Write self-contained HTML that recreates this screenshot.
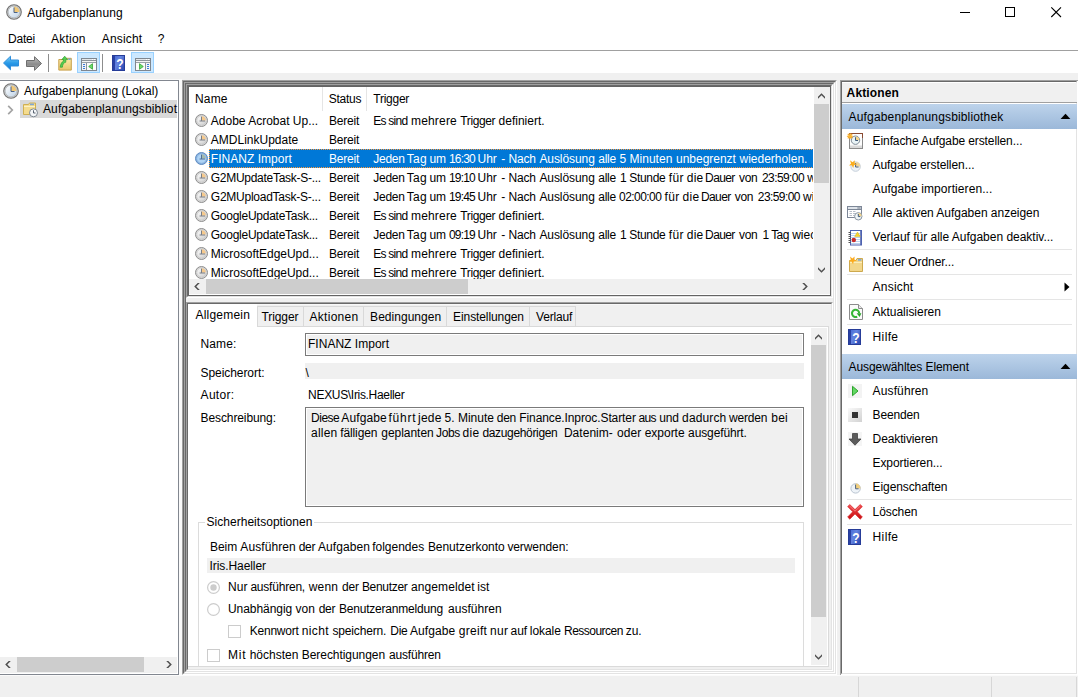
<!DOCTYPE html>
<html lang="de"><head><meta charset="utf-8"><title>Aufgabenplanung</title>
<style>
html,body{margin:0;padding:0;background:#f0f0f0;overflow:hidden}
#app{position:relative;width:1078px;height:697px;overflow:hidden;font:12px 'Liberation Sans', sans-serif;color:#000}
#app div,#app svg,#app span{position:absolute}
#app svg{overflow:visible}
.t{white-space:pre;line-height:14px;font:12px/14px 'Liberation Sans', sans-serif}
</style></head><body>
<div id="app">
<div style="left:0px;top:0px;width:1078px;height:30px;background:#fff"></div>
<svg style="left:6px;top:4px" width="16" height="16" viewBox="0 0 16 16"><defs><linearGradient id="cg6_4" x1="0" y1="0" x2="1" y2="1"><stop offset="0" stop-color="#ffffff"/><stop offset="1" stop-color="#bfd3e6"/></linearGradient></defs><circle cx="8" cy="8" r="7.3" fill="#cfcfcf" stroke="#727272" stroke-width="1.1"/><circle cx="8" cy="8" r="5.8" fill="url(#cg6_4)" stroke="#aeb4ba" stroke-width=".7"/><path d="M8 8V2.5A5.5 5.5 0 0 1 13.5 8Z" fill="#f0c878"/><path d="M8 3.5V8.5H11.5" fill="none" stroke="#4a6388" stroke-width="1"/></svg>
<svg style="left:950px;top:0" width="128" height="30" viewBox="0 0 128 30"><path d="M10 12.5H20" stroke="#000" stroke-width="1"/><rect x="55.5" y="7.5" width="9" height="9" fill="none" stroke="#000" stroke-width="1"/><path d="M101.3 7.3L111 17M111 7.3L101.3 17" stroke="#000" stroke-width="1.1"/></svg>
<div style="left:0px;top:30px;width:1078px;height:20px;background:#fff"></div>
<div style="left:0px;top:50px;width:1078px;height:1px;background:#a0a0a0"></div>
<div style="left:0px;top:51px;width:1078px;height:22px;background:#fff"></div>
<svg style="left:2px;top:54px" width="18" height="18" viewBox="0 0 18 18"><defs><linearGradient id="ba" x1="0" y1="0" x2="0" y2="1"><stop offset="0" stop-color="#7fd0f7"/><stop offset=".5" stop-color="#2a9be8"/><stop offset="1" stop-color="#1577d3"/></linearGradient></defs><path d="M1.5 9L8.5 2.2V6H16.5V12H8.5V15.8Z" fill="url(#ba)" stroke="#2f8fdc" stroke-width="1" stroke-linejoin="round"/></svg>
<svg style="left:25px;top:54px" width="18" height="18" viewBox="0 0 18 18"><defs><linearGradient id="fa" x1="0" y1="0" x2="0" y2="1"><stop offset="0" stop-color="#c4c4c4"/><stop offset=".55" stop-color="#8c8c8c"/><stop offset="1" stop-color="#b0b0b0"/></linearGradient></defs><path d="M16.5 9.5L9.5 2.7V6.5H1.5V12.5H9.5V16.3Z" fill="url(#fa)" stroke="#6e6e6e" stroke-width="1" stroke-linejoin="round"/></svg>
<div style="left:48px;top:54px;width:1px;height:18px;background:#8d8d8d"></div>
<svg style="left:57px;top:55px" width="16" height="16" viewBox="0 0 16 16"><defs><linearGradient id="fo" x1="0" y1="0" x2="0" y2="1"><stop offset="0" stop-color="#fbeaa8"/><stop offset="1" stop-color="#e9c76c"/></linearGradient></defs><path d="M1.8 4.5H8.5L9.5 3.3H14.3V15.1H1.8Z" fill="url(#fo)" stroke="#c9a24a" stroke-width="1"/><rect x="11.3" y="3.6" width="2.4" height="1.2" fill="#5b9be0"/><path d="M3.2 12.2C3.6 8.6 5 6.8 6.6 6V4.6H4.8L7.7 1.2L10.6 4.6H8.8V7.2C6.6 7.6 5.6 9.4 5.4 12.2Z" fill="#52cf52" stroke="#2f9e2f" stroke-width=".7" stroke-linejoin="round"/></svg>
<div style="left:77px;top:52px;width:23px;height:21px;background:#cce8ff;border:1px solid #99d1ff;box-sizing:border-box"></div>
<svg style="left:81px;top:58px" width="16" height="13" viewBox="0 0 16 13"><rect x=".5" y=".5" width="15" height="12" fill="#fbfbfb" stroke="#7f8790"/><rect x="1" y="1" width="14" height="1" fill="#e4e7ea"/><rect x="11" y="1" width="1" height="1" fill="#fff"/><rect x="13" y="1" width="1" height="1" fill="#fff"/><path d="M1 2.5H15" stroke="#8d949b"/><path d="M1 4.5H15" stroke="#9aa1a8"/><rect x="1" y="3" width="14" height="1" fill="#f4f4f4"/><path d="M5.5 5V12" stroke="#8d949b"/><rect x="1" y="5" width="4" height="7" fill="#f2f4f6"/><rect x="2" y="6" width="2" height="1" fill="#3a7ad9"/><rect x="2" y="8" width="2" height="1" fill="#3a7ad9"/><rect x="2" y="10" width="2" height="1" fill="#3a7ad9"/><path d="M11.5 5.7V11.3L7.7 8.5Z" fill="#6ad96a" stroke="#35a535" stroke-width=".8" stroke-linejoin="round"/></svg>
<div style="left:102px;top:54px;width:1px;height:18px;background:#8d8d8d"></div>
<svg style="left:112px;top:55px" width="13" height="16" viewBox="0 0 13 16"><defs><linearGradient id="hht" x1="0" y1="0" x2="1" y2=".6"><stop offset="0" stop-color="#3f63d2"/><stop offset=".55" stop-color="#6585e0"/><stop offset="1" stop-color="#3350b8"/></linearGradient></defs><rect x=".5" y=".5" width="12" height="15" fill="url(#hht)" stroke="#263c98"/><rect x="1" y="1" width="2" height="14" fill="#2a41a4"/><text transform="translate(7.9 13.6) scale(.78 1)" text-anchor="middle" font-family="Liberation Sans, sans-serif" font-weight="bold" font-size="15.5" fill="#fff">?</text></svg>
<div style="left:131px;top:52px;width:23px;height:21px;background:#cce8ff;border:1px solid #99d1ff;box-sizing:border-box"></div>
<svg style="left:135px;top:58px" width="16" height="13" viewBox="0 0 16 13"><rect x=".5" y=".5" width="15" height="12" fill="#fbfbfb" stroke="#7f8790"/><rect x="1" y="1" width="14" height="1" fill="#e4e7ea"/><rect x="11" y="1" width="1" height="1" fill="#fff"/><rect x="13" y="1" width="1" height="1" fill="#fff"/><path d="M1 2.5H15" stroke="#8d949b"/><path d="M1 4.5H15" stroke="#9aa1a8"/><rect x="1" y="3" width="14" height="1" fill="#f4f4f4"/><path d="M10.5 5V12" stroke="#8d949b"/><rect x="11" y="5" width="4" height="7" fill="#f2f4f6"/><rect x="12" y="6" width="2" height="1" fill="#3a7ad9"/><rect x="12" y="8" width="2" height="1" fill="#3a7ad9"/><rect x="12" y="10" width="2" height="1" fill="#3a7ad9"/><path d="M4.5 5.7V11.3L8.3 8.5Z" fill="#6ad96a" stroke="#35a535" stroke-width=".8" stroke-linejoin="round"/></svg>
<div style="left:0px;top:73px;width:1078px;height:624px;background:#f0f0f0"></div>
<div style="left:0px;top:80px;width:179px;height:595px;background:#fff;border-top:1px solid #828790;border-right:1px solid #828790;border-bottom:1px solid #828790;box-sizing:border-box"></div>
<div style="left:179px;top:79px;width:3px;height:596px;background:#fafafa"></div>
<div style="left:0px;top:79px;width:179px;height:1px;background:#fafafa"></div>
<svg style="left:3px;top:83px" width="16" height="16" viewBox="0 0 16 16"><defs><linearGradient id="cg3_83" x1="0" y1="0" x2="1" y2="1"><stop offset="0" stop-color="#ffffff"/><stop offset="1" stop-color="#bfd3e6"/></linearGradient></defs><circle cx="8" cy="8" r="7.3" fill="#cfcfcf" stroke="#727272" stroke-width="1.1"/><circle cx="8" cy="8" r="5.8" fill="url(#cg3_83)" stroke="#aeb4ba" stroke-width=".7"/><path d="M8 8V2.5A5.5 5.5 0 0 1 13.5 8Z" fill="#f0c878"/><path d="M8 3.5V8.5H11.5" fill="none" stroke="#4a6388" stroke-width="1"/></svg>
<div style="left:20px;top:100px;width:157px;height:18px;background:#d9d9d9"></div>
<svg style="left:7px;top:105px" width="7" height="10" viewBox="0 0 7 10"><path d="M1.2 .8L5.3 5L1.2 9.2" fill="none" stroke="#a3a3a3" stroke-width="1.7"/></svg>
<svg style="left:22px;top:101px" width="17" height="17" viewBox="0 0 17 17"><path d="M1.5 3.5H6.5L7.5 2H13.5V13.5H1.5Z" fill="#f5dc8e" stroke="#d0b052" stroke-width="1"/><rect x="8" y="2.6" width="4" height="1.6" fill="#7fa6d8"/><path d="M2 5.5H13" stroke="#fdf2c4"/><circle cx="11.5" cy="11.8" r="4" fill="#f4f6f8" stroke="#7d8791" stroke-width="1"/><path d="M11.5 9.3V12H13.5" fill="none" stroke="#55606e" stroke-width="1"/></svg>
<div style="left:0px;top:657px;width:177px;height:16px;background:#f0f0f0"></div>
<div style="left:17px;top:657px;width:127px;height:15px;background:#cdcdcd"></div>
<svg style="left:5px;top:661px" width="6" height="7" viewBox="0 0 6 7"><path d="M3.7 0L.2 3.5L3.7 7H5.8L2.3 3.5L5.8 0Z" fill="#505050"/></svg>
<svg style="left:166px;top:661px" width="6" height="7" viewBox="0 0 6 7"><path d="M2.3 0L5.8 3.5L2.3 7H.2L3.7 3.5L.2 0Z" fill="#505050"/></svg>
<div style="left:182px;top:80px;width:655px;height:595px;box-sizing:border-box;border-top:1px solid #a0a0a0;border-left:1px solid #a0a0a0;border-right:1px solid #fff;border-bottom:1px solid #fff"></div>
<div style="left:183px;top:81px;width:653px;height:593px;box-sizing:border-box;border-top:1px solid #696969;border-left:1px solid #696969;border-right:1px solid #e3e3e3;border-bottom:1px solid #e3e3e3"></div>
<div style="left:184px;top:82px;width:651px;height:591px;box-sizing:border-box;border-top:1px solid #a0a0a0;border-left:1px solid #a0a0a0;border-right:1px solid #fff;border-bottom:1px solid #fff"></div>
<div style="left:185px;top:83px;width:649px;height:589px;box-sizing:border-box;border-top:1px solid #696969;border-left:1px solid #696969;border-right:1px solid #e3e3e3;border-bottom:1px solid #e3e3e3"></div>
<div style="left:186px;top:84px;width:647px;height:214px;box-sizing:border-box;border-top:1px solid #a0a0a0;border-left:1px solid #a0a0a0;border-right:1px solid #fff;border-bottom:1px solid #fff"></div>
<div style="left:187px;top:85px;width:645px;height:212px;box-sizing:border-box;border-top:1px solid #696969;border-left:1px solid #696969;border-right:1px solid #e3e3e3;border-bottom:1px solid #e3e3e3"></div>
<div style="left:188px;top:86px;width:643px;height:210px;box-sizing:border-box;border:1px solid #646464;background:#fff"></div>
<div style="left:186px;top:302px;width:647px;height:369px;box-sizing:border-box;border-top:1px solid #a0a0a0;border-left:1px solid #a0a0a0;border-right:1px solid #fff;border-bottom:1px solid #fff"></div>
<div style="left:187px;top:303px;width:645px;height:367px;box-sizing:border-box;border-top:1px solid #696969;border-left:1px solid #696969;border-right:1px solid #e3e3e3;border-bottom:1px solid #e3e3e3"></div>
<div style="left:188px;top:304px;width:643px;height:365px;background:#f0f0f0"></div>
<div style="left:188px;top:327px;width:641px;height:340px;background:#fff;box-sizing:border-box;border-right:1px solid #dadada;border-bottom:1px solid #dadada"></div>
<div style="left:322px;top:87px;width:1px;height:24px;background:#e5e5e5"></div>
<div style="left:366px;top:87px;width:1px;height:24px;background:#e5e5e5"></div>
<div style="left:189px;top:87px;width:624px;height:192px;overflow:hidden">
<svg style="left:6px;top:27px" width="14" height="14" viewBox="0 0 14 14"><defs><linearGradient id="sc6_27" x1="0" y1="0" x2="1" y2="1"><stop offset="0" stop-color="#fafafa"/><stop offset="1" stop-color="#cfcfcf"/></linearGradient></defs><circle cx="6.5" cy="6.5" r="6" fill="#d9d9d9" stroke="#8e8e8e" stroke-width="1"/><circle cx="6.5" cy="6.5" r="4.6" fill="url(#sc6_27)" stroke="#bdbdbd" stroke-width=".5"/><path d="M6.5 6.5V2.2A4.3 4.3 0 0 1 10.8 6.5Z" fill="#f6c98c"/><path d="M6.5 2.6V7M4.6 7H10" fill="none" stroke="#7a7f86" stroke-width="1"/></svg>
<svg style="left:6px;top:46px" width="14" height="14" viewBox="0 0 14 14"><defs><linearGradient id="sc6_46" x1="0" y1="0" x2="1" y2="1"><stop offset="0" stop-color="#fafafa"/><stop offset="1" stop-color="#cfcfcf"/></linearGradient></defs><circle cx="6.5" cy="6.5" r="6" fill="#d9d9d9" stroke="#8e8e8e" stroke-width="1"/><circle cx="6.5" cy="6.5" r="4.6" fill="url(#sc6_46)" stroke="#bdbdbd" stroke-width=".5"/><path d="M6.5 6.5V2.2A4.3 4.3 0 0 1 10.8 6.5Z" fill="#f6c98c"/><path d="M6.5 2.6V7M4.6 7H10" fill="none" stroke="#7a7f86" stroke-width="1"/></svg>
<div style="left:20px;top:62px;width:605px;height:19px;background:#0078d7;box-sizing:border-box;border:1px dotted #ff9a3c"></div>
<svg style="left:6px;top:65px" width="14" height="14" viewBox="0 0 14 14"><circle cx="6.5" cy="6.5" r="6" fill="#86afdd" stroke="#5f8cc2" stroke-width="1"/><circle cx="6.5" cy="6.5" r="4.6" fill="#aed3f4" stroke="#8db6e2" stroke-width=".5"/><path d="M6.5 6.5V2.2A4.3 4.3 0 0 1 10.8 6.5Z" fill="#a3b9ad"/><path d="M6.5 2.6V7M4.6 7H10" fill="none" stroke="#4f6f97" stroke-width="1"/></svg>
<svg style="left:6px;top:84px" width="14" height="14" viewBox="0 0 14 14"><defs><linearGradient id="sc6_84" x1="0" y1="0" x2="1" y2="1"><stop offset="0" stop-color="#fafafa"/><stop offset="1" stop-color="#cfcfcf"/></linearGradient></defs><circle cx="6.5" cy="6.5" r="6" fill="#d9d9d9" stroke="#8e8e8e" stroke-width="1"/><circle cx="6.5" cy="6.5" r="4.6" fill="url(#sc6_84)" stroke="#bdbdbd" stroke-width=".5"/><path d="M6.5 6.5V2.2A4.3 4.3 0 0 1 10.8 6.5Z" fill="#f6c98c"/><path d="M6.5 2.6V7M4.6 7H10" fill="none" stroke="#7a7f86" stroke-width="1"/></svg>
<svg style="left:6px;top:103px" width="14" height="14" viewBox="0 0 14 14"><defs><linearGradient id="sc6_103" x1="0" y1="0" x2="1" y2="1"><stop offset="0" stop-color="#fafafa"/><stop offset="1" stop-color="#cfcfcf"/></linearGradient></defs><circle cx="6.5" cy="6.5" r="6" fill="#d9d9d9" stroke="#8e8e8e" stroke-width="1"/><circle cx="6.5" cy="6.5" r="4.6" fill="url(#sc6_103)" stroke="#bdbdbd" stroke-width=".5"/><path d="M6.5 6.5V2.2A4.3 4.3 0 0 1 10.8 6.5Z" fill="#f6c98c"/><path d="M6.5 2.6V7M4.6 7H10" fill="none" stroke="#7a7f86" stroke-width="1"/></svg>
<svg style="left:6px;top:122px" width="14" height="14" viewBox="0 0 14 14"><defs><linearGradient id="sc6_122" x1="0" y1="0" x2="1" y2="1"><stop offset="0" stop-color="#fafafa"/><stop offset="1" stop-color="#cfcfcf"/></linearGradient></defs><circle cx="6.5" cy="6.5" r="6" fill="#d9d9d9" stroke="#8e8e8e" stroke-width="1"/><circle cx="6.5" cy="6.5" r="4.6" fill="url(#sc6_122)" stroke="#bdbdbd" stroke-width=".5"/><path d="M6.5 6.5V2.2A4.3 4.3 0 0 1 10.8 6.5Z" fill="#f6c98c"/><path d="M6.5 2.6V7M4.6 7H10" fill="none" stroke="#7a7f86" stroke-width="1"/></svg>
<svg style="left:6px;top:141px" width="14" height="14" viewBox="0 0 14 14"><defs><linearGradient id="sc6_141" x1="0" y1="0" x2="1" y2="1"><stop offset="0" stop-color="#fafafa"/><stop offset="1" stop-color="#cfcfcf"/></linearGradient></defs><circle cx="6.5" cy="6.5" r="6" fill="#d9d9d9" stroke="#8e8e8e" stroke-width="1"/><circle cx="6.5" cy="6.5" r="4.6" fill="url(#sc6_141)" stroke="#bdbdbd" stroke-width=".5"/><path d="M6.5 6.5V2.2A4.3 4.3 0 0 1 10.8 6.5Z" fill="#f6c98c"/><path d="M6.5 2.6V7M4.6 7H10" fill="none" stroke="#7a7f86" stroke-width="1"/></svg>
<svg style="left:6px;top:160px" width="14" height="14" viewBox="0 0 14 14"><defs><linearGradient id="sc6_160" x1="0" y1="0" x2="1" y2="1"><stop offset="0" stop-color="#fafafa"/><stop offset="1" stop-color="#cfcfcf"/></linearGradient></defs><circle cx="6.5" cy="6.5" r="6" fill="#d9d9d9" stroke="#8e8e8e" stroke-width="1"/><circle cx="6.5" cy="6.5" r="4.6" fill="url(#sc6_160)" stroke="#bdbdbd" stroke-width=".5"/><path d="M6.5 6.5V2.2A4.3 4.3 0 0 1 10.8 6.5Z" fill="#f6c98c"/><path d="M6.5 2.6V7M4.6 7H10" fill="none" stroke="#7a7f86" stroke-width="1"/></svg>
<svg style="left:6px;top:179px" width="14" height="14" viewBox="0 0 14 14"><defs><linearGradient id="sc6_179" x1="0" y1="0" x2="1" y2="1"><stop offset="0" stop-color="#fafafa"/><stop offset="1" stop-color="#cfcfcf"/></linearGradient></defs><circle cx="6.5" cy="6.5" r="6" fill="#d9d9d9" stroke="#8e8e8e" stroke-width="1"/><circle cx="6.5" cy="6.5" r="4.6" fill="url(#sc6_179)" stroke="#bdbdbd" stroke-width=".5"/><path d="M6.5 6.5V2.2A4.3 4.3 0 0 1 10.8 6.5Z" fill="#f6c98c"/><path d="M6.5 2.6V7M4.6 7H10" fill="none" stroke="#7a7f86" stroke-width="1"/></svg>
<span class="t" style="left:21.8px;top:27px;letter-spacing:-0.000px;">Adobe Acrobat Up...</span>
<span class="t" style="left:140.0px;top:27px;letter-spacing:-0.227px;">Bereit</span>
<span class="t" style="left:184.2px;top:27px;letter-spacing:-0.737px;">Es sind </span>
<span class="t" style="left:222.0px;top:27px;letter-spacing:0.173px;">mehrere </span>
<span class="t" style="left:271.3px;top:27px;letter-spacing:-0.383px;">Trigger </span>
<span class="t" style="left:309.6px;top:27px;letter-spacing:-0.003px;">definiert.</span>
<span class="t" style="left:21.8px;top:46px;letter-spacing:0.002px;">AMDLinkUpdate</span>
<span class="t" style="left:140.0px;top:46px;letter-spacing:-0.227px;">Bereit</span>
<span class="t" style="left:21.8px;top:65px;letter-spacing:0.025px;color:#fff;">FINANZ Import</span>
<span class="t" style="left:140.0px;top:65px;letter-spacing:-0.227px;color:#fff;">Bereit</span>
<span class="t" style="left:184.2px;top:65px;letter-spacing:-0.241px;color:#fff;">Jeden </span>
<span class="t" style="left:217.8px;top:65px;letter-spacing:0.247px;color:#fff;">Tag </span>
<span class="t" style="left:240.6px;top:65px;letter-spacing:-0.186px;color:#fff;">um </span>
<span class="t" style="left:259.9px;top:65px;letter-spacing:-0.800px;color:#fff;">16:30 </span>
<span class="t" style="left:288.6px;top:65px;letter-spacing:-0.048px;color:#fff;">Uhr </span>
<span class="t" style="left:312.3px;top:65px;letter-spacing:-0.124px;color:#fff;">- Nach </span>
<span class="t" style="left:350.4px;top:65px;letter-spacing:-0.072px;color:#fff;">Auslösung </span>
<span class="t" style="left:409.2px;top:65px;letter-spacing:-0.222px;color:#fff;">alle </span>
<span class="t" style="left:430.4px;top:65px;letter-spacing:0.033px;color:#fff;">5 Minuten </span>
<span class="t" style="left:487.0px;top:65px;letter-spacing:-0.015px;color:#fff;">unbegrenzt </span>
<span class="t" style="left:550.5px;top:65px;letter-spacing:-0.012px;color:#fff;">wiederholen.</span>
<span class="t" style="left:21.8px;top:84px;letter-spacing:-0.283px;">G2MUpdateTask-S-...</span>
<span class="t" style="left:140.0px;top:84px;letter-spacing:-0.227px;">Bereit</span>
<span class="t" style="left:184.2px;top:84px;letter-spacing:-0.241px;">Jeden </span>
<span class="t" style="left:217.8px;top:84px;letter-spacing:0.247px;">Tag </span>
<span class="t" style="left:240.6px;top:84px;letter-spacing:-0.186px;">um </span>
<span class="t" style="left:259.9px;top:84px;letter-spacing:-0.800px;">19:10 </span>
<span class="t" style="left:288.6px;top:84px;letter-spacing:-0.048px;">Uhr </span>
<span class="t" style="left:312.3px;top:84px;letter-spacing:-0.124px;">- Nach </span>
<span class="t" style="left:350.4px;top:84px;letter-spacing:-0.072px;">Auslösung </span>
<span class="t" style="left:409.2px;top:84px;letter-spacing:-0.222px;">alle </span>
<span class="t" style="left:430.9px;top:84px;letter-spacing:-0.318px;">1 Stunde </span>
<span class="t" style="left:479.8px;top:84px;letter-spacing:0.361px;">für </span>
<span class="t" style="left:497.7px;top:84px;letter-spacing:0.295px;">die </span>
<span class="t" style="left:516.1px;top:84px;letter-spacing:-0.618px;">Dauer </span>
<span class="t" style="left:550.0px;top:84px;letter-spacing:-0.353px;">von </span>
<span class="t" style="left:573.0px;top:84px;letter-spacing:-0.590px;">23:59:00 </span>
<span class="t" style="left:618.2px;top:84px;">w</span>
<span class="t" style="left:21.8px;top:103px;letter-spacing:-0.248px;">G2MUploadTask-S-...</span>
<span class="t" style="left:140.0px;top:103px;letter-spacing:-0.227px;">Bereit</span>
<span class="t" style="left:184.2px;top:103px;letter-spacing:-0.241px;">Jeden </span>
<span class="t" style="left:217.8px;top:103px;letter-spacing:0.247px;">Tag </span>
<span class="t" style="left:240.6px;top:103px;letter-spacing:-0.186px;">um </span>
<span class="t" style="left:259.9px;top:103px;letter-spacing:-0.800px;">19:45 </span>
<span class="t" style="left:288.6px;top:103px;letter-spacing:-0.048px;">Uhr </span>
<span class="t" style="left:312.3px;top:103px;letter-spacing:-0.124px;">- Nach </span>
<span class="t" style="left:350.4px;top:103px;letter-spacing:-0.072px;">Auslösung </span>
<span class="t" style="left:409.2px;top:103px;letter-spacing:-0.222px;">alle </span>
<span class="t" style="left:430.0px;top:103px;letter-spacing:-0.540px;">02:00:00 </span>
<span class="t" style="left:475.6px;top:103px;letter-spacing:0.361px;">für </span>
<span class="t" style="left:493.4px;top:103px;letter-spacing:0.328px;">die </span>
<span class="t" style="left:512.0px;top:103px;letter-spacing:-0.617px;">Dauer </span>
<span class="t" style="left:545.8px;top:103px;letter-spacing:-0.353px;">von </span>
<span class="t" style="left:568.8px;top:103px;letter-spacing:-0.577px;">23:59:00 </span>
<span class="t" style="left:614.0px;top:103px;">wi</span>
<span class="t" style="left:21.8px;top:122px;letter-spacing:-0.262px;">GoogleUpdateTask...</span>
<span class="t" style="left:140.0px;top:122px;letter-spacing:-0.227px;">Bereit</span>
<span class="t" style="left:184.2px;top:122px;letter-spacing:-0.737px;">Es sind </span>
<span class="t" style="left:222.0px;top:122px;letter-spacing:0.173px;">mehrere </span>
<span class="t" style="left:271.3px;top:122px;letter-spacing:-0.383px;">Trigger </span>
<span class="t" style="left:309.6px;top:122px;letter-spacing:-0.003px;">definiert.</span>
<span class="t" style="left:21.8px;top:141px;letter-spacing:-0.262px;">GoogleUpdateTask...</span>
<span class="t" style="left:140.0px;top:141px;letter-spacing:-0.227px;">Bereit</span>
<span class="t" style="left:184.2px;top:141px;letter-spacing:-0.241px;">Jeden </span>
<span class="t" style="left:217.8px;top:141px;letter-spacing:0.247px;">Tag </span>
<span class="t" style="left:240.6px;top:141px;letter-spacing:-0.186px;">um </span>
<span class="t" style="left:259.9px;top:141px;letter-spacing:-0.800px;">09:19 </span>
<span class="t" style="left:288.6px;top:141px;letter-spacing:-0.048px;">Uhr </span>
<span class="t" style="left:312.3px;top:141px;letter-spacing:-0.124px;">- Nach </span>
<span class="t" style="left:350.4px;top:141px;letter-spacing:-0.072px;">Auslösung </span>
<span class="t" style="left:409.2px;top:141px;letter-spacing:-0.222px;">alle </span>
<span class="t" style="left:430.9px;top:141px;letter-spacing:-0.318px;">1 Stunde </span>
<span class="t" style="left:479.8px;top:141px;letter-spacing:0.361px;">für </span>
<span class="t" style="left:497.7px;top:141px;letter-spacing:0.295px;">die </span>
<span class="t" style="left:516.1px;top:141px;letter-spacing:-0.618px;">Dauer </span>
<span class="t" style="left:550.0px;top:141px;letter-spacing:-0.353px;">von </span>
<span class="t" style="left:573.6px;top:141px;letter-spacing:-0.608px;">1 Tag </span>
<span class="t" style="left:603.2px;top:141px;">wiec</span>
<span class="t" style="left:21.8px;top:160px;letter-spacing:-0.043px;">MicrosoftEdgeUpd...</span>
<span class="t" style="left:140.0px;top:160px;letter-spacing:-0.227px;">Bereit</span>
<span class="t" style="left:184.2px;top:160px;letter-spacing:-0.737px;">Es sind </span>
<span class="t" style="left:222.0px;top:160px;letter-spacing:0.173px;">mehrere </span>
<span class="t" style="left:271.3px;top:160px;letter-spacing:-0.383px;">Trigger </span>
<span class="t" style="left:309.6px;top:160px;letter-spacing:-0.003px;">definiert.</span>
<span class="t" style="left:21.8px;top:179px;letter-spacing:-0.043px;">MicrosoftEdgeUpd...</span>
<span class="t" style="left:140.0px;top:179px;letter-spacing:-0.227px;">Bereit</span>
<span class="t" style="left:184.2px;top:179px;letter-spacing:-0.737px;">Es sind </span>
<span class="t" style="left:222.0px;top:179px;letter-spacing:0.173px;">mehrere </span>
<span class="t" style="left:271.3px;top:179px;letter-spacing:-0.383px;">Trigger </span>
<span class="t" style="left:309.6px;top:179px;letter-spacing:-0.003px;">definiert.</span>
</div>
<div style="left:814px;top:87px;width:16px;height:192px;background:#f0f0f0"></div>
<div style="left:814px;top:104px;width:15px;height:79px;background:#cdcdcd"></div>
<svg style="left:818px;top:93px" width="7" height="6" viewBox="0 0 7 6"><path d="M0 3.7L3.5 .2L7 3.7V5.8L3.5 2.3L0 5.8Z" fill="#505050"/></svg>
<svg style="left:818px;top:267px" width="7" height="6" viewBox="0 0 7 6"><path d="M0 2.3L3.5 5.8L7 2.3V.2L3.5 3.7L0 .2Z" fill="#505050"/></svg>
<div style="left:189px;top:279px;width:641px;height:15px;background:#f0f0f0"></div>
<div style="left:206px;top:279px;width:262px;height:15px;background:#cdcdcd"></div>
<svg style="left:194px;top:283px" width="6" height="7" viewBox="0 0 6 7"><path d="M3.7 0L.2 3.5L3.7 7H5.8L2.3 3.5L5.8 0Z" fill="#505050"/></svg>
<svg style="left:802px;top:283px" width="6" height="7" viewBox="0 0 6 7"><path d="M2.3 0L5.8 3.5L2.3 7H.2L3.7 3.5L.2 0Z" fill="#505050"/></svg>
<div style="left:188px;top:304px;width:643px;height:23px;background:#f0f0f0"></div>
<div style="left:188px;top:304px;width:643px;height:1px;background:#f8f8f8"></div>
<div style="left:188px;top:326px;width:641px;height:1px;background:#dadada"></div>
<div style="left:257px;top:306px;width:47px;height:21px;background:#f0f0f0;border:1px solid #d9d9d9;box-sizing:border-box"></div>
<div style="left:303px;top:306px;width:61px;height:21px;background:#f0f0f0;border:1px solid #d9d9d9;box-sizing:border-box"></div>
<div style="left:363px;top:306px;width:84px;height:21px;background:#f0f0f0;border:1px solid #d9d9d9;box-sizing:border-box"></div>
<div style="left:446px;top:306px;width:84px;height:21px;background:#f0f0f0;border:1px solid #d9d9d9;box-sizing:border-box"></div>
<div style="left:529px;top:306px;width:47px;height:21px;background:#f0f0f0;border:1px solid #d9d9d9;box-sizing:border-box"></div>
<div style="left:188px;top:304px;width:69px;height:23px;background:#fff"></div>
<div style="left:305px;top:333px;width:499px;height:23px;background:#f0f0f0;border:1px solid #7a7a7a;box-sizing:border-box;box-shadow:inset 0 0 0 1px #fff"></div>
<div style="left:305px;top:363px;width:499px;height:16px;background:#f0f0f0"></div>
<div style="left:305px;top:407px;width:499px;height:100px;background:#f0f0f0;border:1px solid #7a7a7a;box-sizing:border-box;box-shadow:inset 0 0 0 1px #fff"></div>
<div style="left:198px;top:522px;width:606px;height:144px;border:1px solid #dcdcdc;border-bottom:none;box-sizing:border-box"></div>
<div style="left:205px;top:515px;width:109px;height:14px;background:#fff"></div>
<div style="left:207px;top:558px;width:588px;height:15px;background:#f0f0f0"></div>
<svg style="left:207px;top:581px" width="13" height="13" viewBox="0 0 13 13"><circle cx="6.5" cy="6.5" r="5.9" fill="#fff" stroke="#cccccc" stroke-width="1.2"/><circle cx="6.5" cy="6.5" r="3.2" fill="#cccccc"/></svg>
<svg style="left:207px;top:603px" width="13" height="13" viewBox="0 0 13 13"><circle cx="6.5" cy="6.5" r="5.9" fill="#fff" stroke="#cccccc" stroke-width="1.2"/></svg>
<div style="left:228px;top:625px;width:13px;height:13px;background:#fff;border:1px solid #cccccc;box-sizing:border-box"></div>
<div style="left:207px;top:649px;width:13px;height:13px;background:#fff;border:1px solid #cccccc;box-sizing:border-box"></div>
<div style="left:811px;top:328px;width:16px;height:337px;background:#f0f0f0"></div>
<div style="left:811px;top:345px;width:15px;height:272px;background:#cdcdcd"></div>
<svg style="left:815px;top:334px" width="7" height="6" viewBox="0 0 7 6"><path d="M0 3.7L3.5 .2L7 3.7V5.8L3.5 2.3L0 5.8Z" fill="#505050"/></svg>
<svg style="left:815px;top:654px" width="7" height="6" viewBox="0 0 7 6"><path d="M0 2.3L3.5 5.8L7 2.3V.2L3.5 3.7L0 .2Z" fill="#505050"/></svg>
<div style="left:840px;top:80px;width:238px;height:595px;background:#fff;box-sizing:border-box;border-top:1px solid #a0a0a0;border-left:1px solid #a0a0a0"></div>
<div style="left:841px;top:81px;width:236px;height:593px;box-sizing:border-box;border-top:1px solid #696969;border-left:1px solid #696969;border-right:1px solid #e3e3e3;border-bottom:1px solid #e3e3e3"></div>
<div style="left:842px;top:83px;width:235px;height:19px;background:#f0f0f0"></div>
<div style="left:842px;top:102px;width:235px;height:1px;background:#a0a0a0"></div>
<div style="left:842px;top:104px;width:235px;height:25px;background:linear-gradient(#bdd3eb,#9bb8d9)"></div>
<svg style="left:1060px;top:113px" width="11" height="7" viewBox="0 0 11 7"><path d="M.6 6L5.5 .8L10.4 6Z" fill="#000"/></svg>
<div style="left:842px;top:354px;width:235px;height:25px;background:linear-gradient(#bdd3eb,#9bb8d9)"></div>
<svg style="left:1060px;top:363px" width="11" height="7" viewBox="0 0 11 7"><path d="M.6 6L5.5 .8L10.4 6Z" fill="#000"/></svg>
<div style="left:847px;top:249px;width:225px;height:1px;background:#e5e5e5"></div>
<div style="left:847px;top:274px;width:225px;height:1px;background:#e5e5e5"></div>
<div style="left:847px;top:299px;width:225px;height:1px;background:#e5e5e5"></div>
<div style="left:847px;top:324px;width:225px;height:1px;background:#e5e5e5"></div>
<div style="left:847px;top:499px;width:225px;height:1px;background:#e5e5e5"></div>
<div style="left:847px;top:524px;width:225px;height:1px;background:#e5e5e5"></div>
<svg style="left:1064px;top:282px" width="6" height="10" viewBox="0 0 6 10"><path d="M.5 .5L5.5 5L.5 9.5Z" fill="#000"/></svg>
<svg style="left:847px;top:133px" width="16" height="16" viewBox="0 0 16 16"><rect x="2.5" y=".5" width="13" height="15" fill="#fdfdfd" stroke="#8a8a8a"/><path d="M2 .5H16" stroke="#8a4a32" stroke-width="1"/><path d="M15.5 0V5" stroke="#8a4a32"/><rect x="3" y="12.5" width="12" height="2.5" fill="#d9d9d9"/><circle cx="8.5" cy="7.2" r="4.2" fill="#e9f3f6" stroke="#7f8b96" stroke-width="1"/><path d="M8.5 7.2V3.4A3.8 3.8 0 0 1 12.3 7.2Z" fill="#f3d38a"/><path d="M8.5 4.3V7.5H11" fill="none" stroke="#3f5a7a" stroke-width="1"/><path d="M3 0.10000000000000009L3 6.300000000000001M-0.10000000000000009 3.2L6.1 3.2M0.77 0.97L5.23 5.43M0.77 5.43L5.23 0.97" stroke="#f5a623" stroke-width="1.1"/><circle cx="3" cy="3.2" r="1.40" fill="#fbb731"/></svg>
<svg style="left:849px;top:160px" width="14" height="14" viewBox="0 0 14 14"><circle cx="6.6" cy="6.6" r="4.7" fill="#eef3f8" stroke="#c5cfda" stroke-width="1"/><path d="M6.6 6.6V1.9A4.7 4.7 0 0 1 11.3 6.6Z" fill="#f1d59a"/><path d="M6.6 3V7H9.6" fill="none" stroke="#4d607a" stroke-width="1"/><path d="M1 .3L3.6 2.2L5.8 .2L5.6 3.2L8 4.6L5 5L4.2 8L2.8 5.2L0 5.4L2 3.4Z" fill="#fcae1e"/></svg>
<svg style="left:847px;top:206px" width="16" height="15" viewBox="0 0 16 15"><rect x=".5" y=".5" width="14" height="11" fill="#fff" stroke="#7d8797"/><rect x="1" y="1" width="13" height="2.2" fill="#dfe4ea"/><path d="M1 3.5H14" stroke="#7d8797"/><rect x="10.5" y="1.3" width="1.2" height="1.4" fill="#6c7686"/><rect x="12.3" y="1.3" width="1.2" height="1.4" fill="#6c7686"/><path d="M2.5 5.5H5M6 5.5H8.5M2.5 7.5H5M6 7.5H8.5M2.5 9.5H5M6 9.5H7.5" stroke="#b8bfc9" stroke-width="1"/><circle cx="11.3" cy="10.3" r="3.7" fill="#eef4f7" stroke="#8a96a2" stroke-width="1"/><path d="M11.3 10.3V7A3.3 3.3 0 0 1 14.6 10.3Z" fill="#f3d38a"/><path d="M11.3 8V10.6H13.3" fill="none" stroke="#3f5a7a" stroke-width="1"/></svg>
<svg style="left:848px;top:230px" width="14" height="16" viewBox="0 0 14 16"><rect x="2.5" y=".5" width="11" height="14.5" fill="#fff" stroke="#4e63b0"/><path d="M13 .5V15" stroke="#4e63b0" stroke-width="1.6"/><path d="M3 3.5H12M3 5.5H12M3 7.5H12M3 9.5H12M3 11.5H12M3 13.5H12" stroke="#aac6ea" stroke-width=".8"/><path d="M.5 2.5H3M.5 4.5H3M.5 6.5H3M.5 8.5H3M.5 10.5H3M.5 12.5H3" stroke="#555" stroke-width="1"/><path d="M9.5 2L12.3 6.6H6.7Z" fill="#f6d22c" stroke="#d9b21a" stroke-width=".5"/><circle cx="5.8" cy="10" r="2.2" fill="#c92a2a"/></svg>
<svg style="left:848px;top:256px" width="15" height="16" viewBox="0 0 15 16"><path d="M1.5 4.5H8L9 2.5H14.5V15.5H1.5Z" fill="#f2d68a" stroke="#cda94e" stroke-width="1"/><rect x="10" y="3.2" width="3.4" height="1.4" fill="#6fa0dc"/><path d="M2 6.5H14" stroke="#fbeebc"/><path d="M2 .6L4.4 2.4L6.6 .4L6.4 3.4L8.8 4.8L5.8 5.2L5 8.2L3.6 5.4L.8 5.6L2.8 3.6Z" fill="#fcaa1c"/></svg>
<svg style="left:849px;top:304px" width="14" height="16" viewBox="0 0 14 16"><path d="M.5 .5H9.5L13.5 4.5V15.5H.5Z" fill="#fbfbfb" stroke="#8c8c8c"/><path d="M9.5 .5V4.5H13.5" fill="#e8e8e8" stroke="#8c8c8c"/><path d="M10.2 9.2A3.6 3.6 0 1 0 8.2 12.6" fill="none" stroke="#35b535" stroke-width="2.1"/><path d="M7.6 9.2H12.4L10.6 13Z" fill="#2aa52a"/></svg>
<svg style="left:848px;top:329px" width="13" height="16" viewBox="0 0 13 16"><defs><linearGradient id="hh329" x1="0" y1="0" x2="1" y2=".6"><stop offset="0" stop-color="#3f63d2"/><stop offset=".55" stop-color="#6585e0"/><stop offset="1" stop-color="#3350b8"/></linearGradient></defs><rect x=".5" y=".5" width="12" height="15" fill="url(#hh329)" stroke="#263c98"/><rect x="1" y="1" width="2" height="14" fill="#2a41a4"/><text transform="translate(7.9 13.6) scale(.78 1)" text-anchor="middle" font-family="Liberation Sans, sans-serif" font-weight="bold" font-size="15.5" fill="#fff">?</text></svg>
<svg style="left:848px;top:529px" width="13" height="16" viewBox="0 0 13 16"><defs><linearGradient id="hh529" x1="0" y1="0" x2="1" y2=".6"><stop offset="0" stop-color="#3f63d2"/><stop offset=".55" stop-color="#6585e0"/><stop offset="1" stop-color="#3350b8"/></linearGradient></defs><rect x=".5" y=".5" width="12" height="15" fill="url(#hh529)" stroke="#263c98"/><rect x="1" y="1" width="2" height="14" fill="#2a41a4"/><text transform="translate(7.9 13.6) scale(.78 1)" text-anchor="middle" font-family="Liberation Sans, sans-serif" font-weight="bold" font-size="15.5" fill="#fff">?</text></svg>
<svg style="left:848px;top:384px" width="14" height="14" viewBox="0 0 14 14"><rect width="14" height="14" fill="#f3f3f3"/><path d="M4.5 2.3V11.7L10 7Z" fill="#62d862" stroke="#2ea32e" stroke-width="1" stroke-linejoin="round"/></svg>
<svg style="left:848px;top:408px" width="14" height="14" viewBox="0 0 14 14"><defs><linearGradient id="bg1" x1="0" y1="0" x2="1" y2="1"><stop offset="0" stop-color="#fafafa"/><stop offset="1" stop-color="#d2d2d2"/></linearGradient></defs><rect width="14" height="14" fill="url(#bg1)"/><rect x="4" y="4" width="6" height="6" fill="#333"/></svg>
<svg style="left:848px;top:432px" width="14" height="14" viewBox="0 0 14 14"><rect width="14" height="14" fill="#f5f5f5"/><path d="M4.5 1.5H9.5V7H13L7 13.2L1 7H4.5Z" fill="#5b5b5b" stroke="#444" stroke-width=".8" stroke-linejoin="round"/></svg>
<svg style="left:850px;top:482px" width="13" height="13" viewBox="0 0 13 13"><circle cx="5.6" cy="6.4" r="4.7" fill="#eef3f8" stroke="#b9c4d0" stroke-width="1"/><path d="M5.6 6.4V1.5A4.9 4.9 0 0 1 10.5 6.4Z" fill="#f1cf7e"/><path d="M5.6 2.6V6.8H8.6" fill="none" stroke="#4d607a" stroke-width="1"/></svg>
<svg style="left:847px;top:504px" width="16" height="16" viewBox="0 0 16 16"><defs><linearGradient id="xg" x1="0" y1="0" x2="0" y2="1"><stop offset="0" stop-color="#f0474a"/><stop offset="1" stop-color="#c80e12"/></linearGradient></defs><path d="M.6 2.6L2.8 .5L8 5.6L13.2 .5L15.4 2.6L10.3 7.8L15.4 13L13.2 15.2L8 10L2.8 15.2L.6 13L5.7 7.8Z" fill="url(#xg)" stroke="#d92a2e" stroke-width=".6" stroke-linejoin="round"/><path d="M2.6 2L8 7.2L13.3 2" fill="none" stroke="#f77f82" stroke-width=".9"/></svg>
<div style="left:0px;top:675px;width:1078px;height:22px;background:#f0f0f0"></div>
<div style="left:0px;top:675px;width:1078px;height:1px;background:#fbfbfb"></div>
<div style="left:858px;top:677px;width:1px;height:20px;background:#d7d7d7"></div>
<div style="left:991px;top:677px;width:1px;height:20px;background:#d7d7d7"></div>
<div style="left:1076px;top:677px;width:1px;height:20px;background:#d7d7d7"></div>
<span class="t" style="left:27.2px;top:6px;letter-spacing:0.094px;">Aufgabenplanung</span>
<span class="t" style="left:8.0px;top:32px;letter-spacing:-0.183px;">Datei</span>
<span class="t" style="left:50.9px;top:32px;letter-spacing:0.257px;">Aktion</span>
<span class="t" style="left:101.8px;top:32px;letter-spacing:0.149px;">Ansicht</span>
<span class="t" style="left:157.8px;top:32px;">?</span>
<span class="t" style="left:23.9px;top:84px;letter-spacing:0.017px;">Aufgabenplanung (Lokal)</span>
<span class="t" style="left:43.0px;top:102px;letter-spacing:0.115px;">Aufgabenplanungsbibliot</span>
<span class="t" style="left:195.0px;top:92px;letter-spacing:0.146px;">Name</span>
<span class="t" style="left:328.8px;top:92px;letter-spacing:-0.272px;">Status</span>
<span class="t" style="left:373.3px;top:92px;letter-spacing:-0.254px;">Trigger</span>
<span class="t" style="left:261.6px;top:310px;letter-spacing:-0.111px;">Trigger</span>
<span class="t" style="left:309.6px;top:310px;letter-spacing:0.262px;">Aktionen</span>
<span class="t" style="left:370.1px;top:310px;letter-spacing:0.033px;">Bedingungen</span>
<span class="t" style="left:453.1px;top:310px;letter-spacing:-0.097px;">Einstellungen</span>
<span class="t" style="left:536.1px;top:310px;letter-spacing:-0.180px;">Verlauf</span>
<span class="t" style="left:195.5px;top:308px;letter-spacing:0.211px;">Allgemein</span>
<span class="t" style="left:200.6px;top:337px;letter-spacing:0.091px;">Name:</span>
<span class="t" style="left:308.0px;top:337px;letter-spacing:0.025px;">FINANZ Import</span>
<span class="t" style="left:200.6px;top:366px;letter-spacing:-0.075px;">Speicherort:</span>
<span class="t" style="left:305.6px;top:366px;">\</span>
<span class="t" style="left:200.6px;top:388px;letter-spacing:0.297px;">Autor:</span>
<span class="t" style="left:308.1px;top:388px;letter-spacing:-0.318px;">NEXUS\Iris.Haeller</span>
<span class="t" style="left:200.6px;top:411px;letter-spacing:-0.109px;">Beschreibung:</span>
<span class="t" style="left:311.1px;top:411px;letter-spacing:-0.517px;">Diese </span>
<span class="t" style="left:341.3px;top:411px;letter-spacing:0.126px;">Aufgabe </span>
<span class="t" style="left:388.5px;top:411px;letter-spacing:0.777px;">führt </span>
<span class="t" style="left:418.0px;top:411px;letter-spacing:0.253px;">jede </span>
<span class="t" style="left:444.5px;top:411px;letter-spacing:0.016px;">5. Minute </span>
<span class="t" style="left:496.8px;top:411px;letter-spacing:-0.277px;">den </span>
<span class="t" style="left:519.3px;top:411px;letter-spacing:-0.102px;">Finance.Inproc.Starter </span>
<span class="t" style="left:638.6px;top:411px;letter-spacing:-0.686px;">aus </span>
<span class="t" style="left:659.2px;top:411px;letter-spacing:-0.144px;">und </span>
<span class="t" style="left:682.1px;top:411px;letter-spacing:0.118px;">dadurch </span>
<span class="t" style="left:729.1px;top:411px;letter-spacing:-0.193px;">werden </span>
<span class="t" style="left:771.3px;top:411px;letter-spacing:0.161px;">bei</span>
<span class="t" style="left:311.1px;top:426px;letter-spacing:0.208px;">allen </span>
<span class="t" style="left:340.3px;top:426px;letter-spacing:-0.129px;">fälligen </span>
<span class="t" style="left:381.3px;top:426px;letter-spacing:-0.035px;">geplanten </span>
<span class="t" style="left:436.1px;top:426px;letter-spacing:-0.415px;">Jobs </span>
<span class="t" style="left:462.6px;top:426px;letter-spacing:0.295px;">die </span>
<span class="t" style="left:482.4px;top:426px;letter-spacing:-0.339px;">dazugehörigen </span>
<span class="t" style="left:563.9px;top:426px;letter-spacing:0.039px;">Datenim- </span>
<span class="t" style="left:617.0px;top:426px;letter-spacing:0.092px;">oder </span>
<span class="t" style="left:644.7px;top:426px;letter-spacing:-0.019px;">exporte </span>
<span class="t" style="left:688.1px;top:426px;letter-spacing:-0.122px;">ausgeführt.</span>
<span class="t" style="left:206.6px;top:515px;letter-spacing:0.021px;">Sicherheitsoptionen</span>
<span class="t" style="left:209.9px;top:540px;letter-spacing:-0.011px;">Beim </span>
<span class="t" style="left:240.3px;top:540px;letter-spacing:0.089px;">Ausführen </span>
<span class="t" style="left:298.7px;top:540px;letter-spacing:-0.315px;">der </span>
<span class="t" style="left:318.0px;top:540px;letter-spacing:0.064px;">Aufgaben </span>
<span class="t" style="left:372.2px;top:540px;letter-spacing:-0.005px;">folgendes </span>
<span class="t" style="left:427.9px;top:540px;letter-spacing:-0.053px;">Benutzerkonto </span>
<span class="t" style="left:507.4px;top:540px;letter-spacing:-0.095px;">verwenden:</span>
<span class="t" style="left:209.6px;top:559px;letter-spacing:-0.088px;">Iris.Haeller</span>
<span class="t" style="left:228.0px;top:580px;letter-spacing:0.085px;">Nur </span>
<span class="t" style="left:250.4px;top:580px;letter-spacing:-0.212px;">ausführen, </span>
<span class="t" style="left:308.8px;top:580px;letter-spacing:0.153px;">wenn </span>
<span class="t" style="left:342.1px;top:580px;letter-spacing:-0.281px;">der </span>
<span class="t" style="left:361.9px;top:580px;letter-spacing:-0.304px;">Benutzer </span>
<span class="t" style="left:411.0px;top:580px;letter-spacing:0.098px;">angemeldet </span>
<span class="t" style="left:477.3px;top:580px;letter-spacing:-0.033px;">ist</span>
<span class="t" style="left:228.0px;top:602px;letter-spacing:-0.053px;">Unabhängig </span>
<span class="t" style="left:295.5px;top:602px;letter-spacing:0.080px;">von </span>
<span class="t" style="left:318.7px;top:602px;letter-spacing:-0.281px;">der </span>
<span class="t" style="left:338.9px;top:602px;letter-spacing:-0.195px;">Benutzeranmeldung </span>
<span class="t" style="left:448.0px;top:602px;letter-spacing:0.036px;">ausführen</span>
<span class="t" style="left:249.7px;top:624px;letter-spacing:-0.213px;">Kennwort </span>
<span class="t" style="left:301.8px;top:624px;letter-spacing:0.348px;">nicht </span>
<span class="t" style="left:332.4px;top:624px;letter-spacing:-0.148px;">speichern. </span>
<span class="t" style="left:390.3px;top:624px;letter-spacing:-0.272px;">Die </span>
<span class="t" style="left:409.9px;top:624px;letter-spacing:0.083px;">Aufgabe </span>
<span class="t" style="left:458.7px;top:624px;letter-spacing:0.302px;">greift </span>
<span class="t" style="left:490.0px;top:624px;letter-spacing:0.285px;">nur </span>
<span class="t" style="left:510.6px;top:624px;letter-spacing:-0.096px;">auf </span>
<span class="t" style="left:529.8px;top:624px;letter-spacing:-0.060px;">lokale </span>
<span class="t" style="left:564.1px;top:624px;letter-spacing:-0.533px;">Ressourcen </span>
<span class="t" style="left:625.8px;top:624px;letter-spacing:-0.072px;">zu.</span>
<span class="t" style="left:228.0px;top:648px;letter-spacing:0.800px;">Mit </span>
<span class="t" style="left:249.7px;top:648px;letter-spacing:-0.013px;">höchsten </span>
<span class="t" style="left:301.8px;top:648px;letter-spacing:-0.056px;">Berechtigungen </span>
<span class="t" style="left:389.1px;top:648px;letter-spacing:-0.208px;">ausführen</span>
<span class="t" style="left:846.6px;top:86px;letter-spacing:0.120px;font-weight:bold">Aktionen</span>
<span class="t" style="left:848.6px;top:110px;letter-spacing:0.154px;">Aufgabenplanungsbibliothek</span>
<span class="t" style="left:848.6px;top:360px;letter-spacing:-0.089px;">Ausgewähltes Element</span>
<span class="t" style="left:872.6px;top:134px;letter-spacing:-0.103px;">Einfache Aufgabe erstellen...</span>
<span class="t" style="left:872.6px;top:158px;letter-spacing:-0.080px;">Aufgabe erstellen...</span>
<span class="t" style="left:872.6px;top:182px;letter-spacing:0.078px;">Aufgabe importieren...</span>
<span class="t" style="left:872.6px;top:206px;letter-spacing:-0.022px;">Alle aktiven Aufgaben anzeigen</span>
<span class="t" style="left:872.6px;top:230px;letter-spacing:-0.012px;">Verlauf für alle Aufgaben deaktiv...</span>
<span class="t" style="left:872.6px;top:255px;letter-spacing:-0.061px;">Neuer Ordner...</span>
<span class="t" style="left:872.6px;top:280px;letter-spacing:0.206px;">Ansicht</span>
<span class="t" style="left:872.6px;top:305px;letter-spacing:-0.031px;">Aktualisieren</span>
<span class="t" style="left:872.6px;top:330px;letter-spacing:0.357px;">Hilfe</span>
<span class="t" style="left:872.6px;top:384px;letter-spacing:0.122px;">Ausführen</span>
<span class="t" style="left:872.6px;top:408px;letter-spacing:-0.178px;">Beenden</span>
<span class="t" style="left:872.6px;top:432px;letter-spacing:-0.117px;">Deaktivieren</span>
<span class="t" style="left:872.6px;top:456px;letter-spacing:-0.113px;">Exportieren...</span>
<span class="t" style="left:872.6px;top:480px;letter-spacing:-0.097px;">Eigenschaften</span>
<span class="t" style="left:872.6px;top:505px;letter-spacing:-0.082px;">Löschen</span>
<span class="t" style="left:872.6px;top:530px;letter-spacing:0.357px;">Hilfe</span>
</div>
</body></html>
